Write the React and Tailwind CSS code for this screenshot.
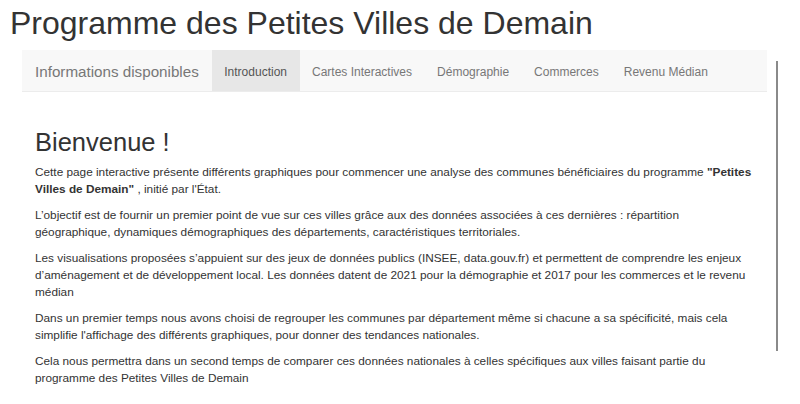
import React from 'react';

const tabs = ['Introduction', 'Cartes Interactives', 'Démographie', 'Commerces', 'Revenu Médian'];

const App = () => {
  const active = 'Introduction';

  return (
    <div className="relative h-[404px] w-[800px] overflow-hidden bg-white font-['Liberation_Sans',Arial,sans-serif] text-[#333]">
      <h1 className="px-[10px] pt-[6px] text-[32px] font-normal leading-[1.1]">
        Programme des Petites Villes de Demain
      </h1>

      <div className="mx-[22px] mt-[9px] w-[745px]">
        <nav className="flex h-[42px] border-b border-[#ececec] bg-[#f8f8f8]">
          <span className="flex items-center px-[13px] pt-[3px] text-[15.2px] text-[#777]">Informations disponibles</span>
          <ul className="flex">
            {tabs.map((tab) => (
              <li
                key={tab}
                className={
                  tab === active
                    ? 'flex items-center bg-[#e7e7e7] px-[12.5px] pt-[2px] text-[12px] text-[#555]'
                    : 'flex items-center px-[12.5px] pt-[2px] text-[12px] text-[#777]'
                }
              >
                {tab}
              </li>
            ))}
          </ul>
        </nav>

        <main className="px-[13px] pt-[36px] text-[11.8px] leading-[17.2px]">
          <h2 className="mb-[8px] text-[25.5px] font-normal leading-[1.1]">Bienvenue !</h2>
          <p className="mb-[8.5px]">
            Cette page interactive présente différents graphiques pour commencer une analyse des communes
            bénéficiaires du programme <b>"Petites Villes de Demain"</b> , initié par l'État.
          </p>
          <p className="mb-[8.5px]">
            L’objectif est de fournir un premier point de vue sur ces villes grâce aux des données associées à
            ces dernières : répartition géographique, dynamiques démographiques des départements,
            caractéristiques territoriales.
          </p>
          <p className="mb-[8.5px]">
            Les visualisations proposées s’appuient sur des jeux de données publics (INSEE, data.gouv.fr) et
            permettent de comprendre les enjeux d’aménagement et de développement local. Les données datent de
            2021 pour la démographie et 2017 pour les commerces et le revenu médian
          </p>
          <p className="mb-[8.5px]">
            Dans un premier temps nous avons choisi de regrouper les communes par département même si chacune a
            sa spécificité, mais cela simplifie l'affichage des différents graphiques, pour donner des tendances
            nationales.
          </p>
          <p>
            Cela nous permettra dans un second temps de comparer ces données nationales à celles spécifiques aux
            villes faisant partie du programme des Petites Villes de Demain
          </p>
        </main>
      </div>

      {/* scrollbar rule on the right */}
      <div className="absolute left-[776px] top-[61px] h-[290px] w-[2px] bg-[#8a8a8a]" />
    </div>
  );
};

export default App;
